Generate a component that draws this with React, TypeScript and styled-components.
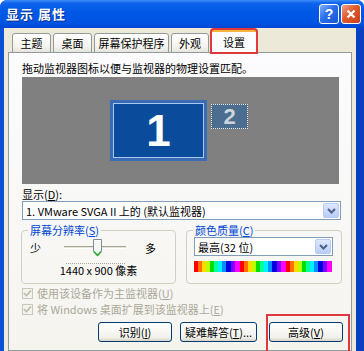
import { createGlobalStyle, styled } from "styled-components";

const GlobalStyle = createGlobalStyle`
  html, body {
    margin: 0;
    padding: 0;
    width: 364px;
    height: 351px;
    overflow: hidden;
    background: #ffffff;
  }
  body {
    font: 11px/14px "Noto Sans CJK SC", "Liberation Sans", sans-serif;
    color: #000;
  }
  * { box-sizing: border-box; }
`;

const Window = styled.div`
  width: 364px;
  height: 351px;
  display: flex;
  flex-direction: column;
  overflow: hidden;
  border-radius: 7px 7px 0 0;
  background: #0a56e0;
`;

const TitleBar = styled.div`
  height: 28px;
  flex: none;
  display: flex;
  align-items: center;
  padding: 0 3px 0 6px;
  background: linear-gradient(
    to bottom,
    #3c8cf8 0%,
    #0d63ea 12%,
    #0058e6 45%,
    #0055e3 80%,
    #0047d2 100%
  );
`;

const Title = styled.span`
  color: #fff;
  font-weight: 700;
  font-size: 13px;
  letter-spacing: 1px;
  text-shadow: 1px 1px 0 #0a2f8c;
`;

const TitleButtons = styled.div`
  margin-left: auto;
  display: flex;
  gap: 2px;
`;

const CaptionButton = styled.div<{ $close?: boolean }>`
  width: 20px;
  height: 20px;
  border: 1px solid #fff;
  border-radius: 3px;
  display: flex;
  align-items: center;
  justify-content: center;
  color: #fff;
  font: bold 14px/1 "Liberation Sans", sans-serif;
  background: ${(p) =>
    p.$close
      ? "linear-gradient(135deg, #f0a184 0%, #e05a2c 45%, #c8401a 100%)"
      : "linear-gradient(135deg, #7fb0fb 0%, #2c6fea 45%, #1654d4 100%)"};
`;

const Frame = styled.div`
  flex: 1;
  display: flex;
  padding: 0 8px 0 4px;
  background: linear-gradient(to right, #0a4fd6, #0a56e0 50%, #0840c0);
  min-height: 0;
`;

const Client = styled.div`
  flex: 1;
  display: flex;
  flex-direction: column;
  padding: 1px 0 0 4px;
  background: #ece9d8;
  min-height: 0;
`;

const TabRow = styled.div`
  display: flex;
  align-items: flex-end;
  gap: 2px;
  height: 24px;
  padding-left: 4px;
  margin-bottom: -1px;
  position: relative;
  z-index: 1;
`;

const Tab = styled.div<{ $w: number; $active?: boolean }>`
  width: ${(p) => p.$w}px;
  height: ${(p) => (p.$active ? 24 : 20)}px;
  border: 1px solid #919b9c;
  border-bottom: ${(p) => (p.$active ? "none" : "1px solid #919b9c")};
  border-top: ${(p) => (p.$active ? "3px solid #f5b53c" : "1px solid #919b9c")};
  border-radius: 3px 3px 0 0;
  display: flex;
  align-items: center;
  justify-content: center;
  background: ${(p) =>
    p.$active
      ? "#fcfcfe"
      : "linear-gradient(to bottom, #ffffff, #f4f3ef 70%, #e6e4dc)"};
  outline: ${(p) => (p.$active ? "2px solid #e2383d" : "none")};
  outline-offset: -1px;
  padding-bottom: ${(p) => (p.$active ? 2 : 0)}px;
`;

const Panel = styled.div`
  width: 344px;
  flex: 1;
  border: 1px solid #919b9c;
  background: linear-gradient(to bottom, #fcfcfe, #f5f4ef);
  display: flex;
  flex-direction: column;
  padding: 8px 8px 0 13px;
`;

const Text = styled.div`
  height: 14px;
  white-space: nowrap;
`;

const MonitorArea = styled.div`
  margin-top: 2px;
  width: 317px;
  height: 107px;
  background: #808080;
  display: flex;
  align-items: flex-start;
  gap: 4px;
  padding: 23px 0 0 88px;
`;

const Monitor = styled.div<{ $primary?: boolean }>`
  display: flex;
  align-items: center;
  justify-content: center;
  font-family: "Liberation Sans", Arial, sans-serif;
  font-weight: 700;
  line-height: 1;
  ${(p) =>
    p.$primary
      ? `
    width: 97px;
    height: 61px;
    border: 3px solid #3a6cb6;
    box-shadow: inset 0 0 0 1px #a9c8ee;
    background: #0a4c9b;
    color: #fff;
    font-size: 44px;
  `
      : `
    width: 37px;
    height: 25px;
    margin-top: 4px;
    border: 1px dotted #e8e8e8;
    background: #4b6e90;
    color: #cdd4dc;
    font-size: 22px;
  `}
`;

const Label = styled.div`
  margin-top: 3px;
  height: 14px;
`;

const U = styled.span`
  text-decoration: underline;
`;

const Combo = styled.div<{ $w: number }>`
  width: ${(p) => p.$w}px;
  height: 19px;
  border: 1px solid #7f9db9;
  background: #fff;
  display: flex;
  align-items: center;
  padding: 1px 1px 1px 3px;
  white-space: nowrap;
`;

const ComboText = styled.span`
  flex: 1;
`;

const ArrowBox = styled.div`
  width: 16px;
  height: 15px;
  border: 1px solid #b7cbf4;
  border-radius: 2px;
  background: linear-gradient(to bottom, #dde8fe, #b9cdf9);
  display: flex;
  align-items: center;
  justify-content: center;
`;

const GroupRow = styled.div`
  margin-top: 3px;
  display: flex;
  gap: 10px;
  margin-left: -1px;
`;

const Group = styled.fieldset<{ $w: number }>`
  width: ${(p) => p.$w}px;
  height: 61px;
  margin: 0;
  border: 1px solid #d0d0bf;
  border-radius: 4px;
  padding: 0 7px;
  display: flex;
  flex-direction: column;
`;

const Legend = styled.legend`
  color: #0046d5;
  padding: 0 2px;
  margin-left: -1px;
  line-height: 14px;
`;

const SliderRow = styled.div`
  display: flex;
  align-items: center;
  height: 20px;
  margin-top: 1px;
  padding-left: 1px;
`;

const Track = styled.div`
  position: relative;
  width: 62px;
  height: 20px;
  margin: 0 19px 0 23px;
`;

const TrackLine = styled.div`
  position: absolute;
  left: 0;
  right: 0;
  top: 8px;
  height: 3px;
  border-top: 1px solid #a3a391;
  border-bottom: 1px solid #fff;
  background: #e6e4da;
`;

const Ticks = styled.div`
  position: absolute;
  left: 2px;
  right: 1px;
  top: 25px;
  border-top: 1px dotted #a8a898;
`;

const Thumb = styled.svg`
  position: absolute;
  left: 28px;
  top: 1px;
`;

const Resolution = styled.div`
  margin-top: 5px;
  text-align: center;
  height: 14px;
`;

const ColorBar = styled.div`
  margin-top: 5px;
  width: 138px;
  height: 11px;
  background: repeating-linear-gradient(
    to right,
    #ff0000 0 4px,
    #ff7000 4px 8px,
    #ffd800 8px 12px,
    #b8ff00 12px 16px,
    #00e000 16px 20px,
    #00ffa0 20px 24px,
    #00f0ff 24px 28px,
    #0090ff 28px 32px,
    #0000e0 32px 37px,
    #8000ff 37px 41px,
    #ff00ff 41px 46px
  );
`;

const CheckRow = styled.div<{ $first?: boolean }>`
  display: flex;
  align-items: center;
  height: 16px;
  margin-top: ${(p) => (p.$first ? 1 : 0)}px;
  color: #aca899;
  gap: 4px;
`;

const CheckText = styled.div`
  white-space: nowrap;
`;

const CheckBox = styled.div`
  width: 11px;
  height: 11px;
  border: 1px solid #cac8bb;
  background: #f4f3ee;
  display: flex;
  align-items: center;
  justify-content: center;
`;

const ButtonRow = styled.div`
  margin-top: 5px;
  display: flex;
  justify-content: flex-end;
`;

const Button = styled.div<{ $w: number; $gap?: number; $marked?: boolean }>`
  position: relative;
  width: ${(p) => p.$w}px;
  height: 20px;
  margin-left: ${(p) => p.$gap ?? 0}px;
  border: 1px solid #003c74;
  border-radius: 3px;
  background: linear-gradient(to bottom, #ffffff, #f2f1ea 80%, #d8d2c6);
  display: flex;
  align-items: center;
  justify-content: center;
  white-space: nowrap;
  &::after {
    content: "";
    display: ${(p) => (p.$marked ? "block" : "none")};
    position: absolute;
    left: -4px;
    right: -8px;
    top: -9px;
    bottom: -16px;
    border: 2px solid #e2383d;
  }
`;

const Chevron = () => (
  <svg width="9" height="6" viewBox="0 0 9 6">
    <path d="M1 1 L4.5 4.5 L8 1" stroke="#4d6185" strokeWidth="2" fill="none" />
  </svg>
);

const Check = () => (
  <svg width="9" height="8" viewBox="0 0 9 8">
    <path d="M1 4 L3.5 6.5 L8 1.5" stroke="#bdbaa8" strokeWidth="1.6" fill="none" />
  </svg>
);

export default function App() {
  return (
    <>
      <GlobalStyle />
      <Window>
        <TitleBar>
          <Title>显示 属性</Title>
          <TitleButtons>
            <CaptionButton>?</CaptionButton>
            <CaptionButton $close>
              <svg width="10" height="10" viewBox="0 0 10 10">
                <path d="M1.5 1.5 L8.5 8.5 M8.5 1.5 L1.5 8.5" stroke="#fff" strokeWidth="2.2" />
              </svg>
            </CaptionButton>
          </TitleButtons>
        </TitleBar>
        <Frame>
          <Client>
            <TabRow>
              <Tab $w={39}>主题</Tab>
              <Tab $w={39}>桌面</Tab>
              <Tab $w={75}>屏幕保护程序</Tab>
              <Tab $w={38}>外观</Tab>
              <Tab $w={46} $active>
                设置
              </Tab>
            </TabRow>
            <Panel>
              <Text>拖动监视器图标以便与监视器的物理设置匹配。</Text>
              <MonitorArea>
                <Monitor $primary>1</Monitor>
                <Monitor>2</Monitor>
              </MonitorArea>
              <Label>
                显示(<U>D</U>):
              </Label>
              <Combo $w={319}>
                <ComboText>1. VMware SVGA II 上的 (默认监视器)</ComboText>
                <ArrowBox>
                  <Chevron />
                </ArrowBox>
              </Combo>
              <GroupRow>
                <Group $w={155}>
                  <Legend>
                    屏幕分辨率(<U>S</U>)
                  </Legend>
                  <SliderRow>
                    <span>少</span>
                    <Track>
                      <TrackLine />
                      <Ticks />
                      <Thumb width="11" height="18" viewBox="0 0 11 18">
                        <path
                          d="M1.5 0.5 H9.5 V12.5 L5.5 17 L1.5 12.5 Z"
                          fill="#f7f7f4"
                          stroke="#7b8c99"
                        />
                        <path d="M2 12.5 L5.5 16.3 L9 12.5" stroke="#2fae2f" strokeWidth="1.6" fill="none" />
                        <path d="M2.2 1.5 H8.8" stroke="#ffffff" />
                      </Thumb>
                    </Track>
                    <span>多</span>
                  </SliderRow>
                  <Resolution>1440 x 900 像素</Resolution>
                </Group>
                <Group $w={156}>
                  <Legend>
                    颜色质量(<U>C</U>)
                  </Legend>
                  <Combo $w={139}>
                    <ComboText>最高(32 位)</ComboText>
                    <ArrowBox>
                      <Chevron />
                    </ArrowBox>
                  </Combo>
                  <ColorBar />
                </Group>
              </GroupRow>
              <CheckRow $first>
                <CheckBox>
                  <Check />
                </CheckBox>
                <CheckText>
                  使用该设备作为主监视器(<U>U</U>)
                </CheckText>
              </CheckRow>
              <CheckRow>
                <CheckBox>
                  <Check />
                </CheckBox>
                <CheckText>
                  将 Windows 桌面扩展到该监视器上(<U>E</U>)
                </CheckText>
              </CheckRow>
              <ButtonRow>
                <Button $w={74}>
                  识别(<U>I</U>)
                </Button>
                <Button $w={77} $gap={8}>
                  疑难解答(<U>T</U>)...
                </Button>
                <Button $w={74} $gap={12} $marked>
                  高级(<U>V</U>)
                </Button>
              </ButtonRow>
            </Panel>
          </Client>
        </Frame>
      </Window>
    </>
  );
}
